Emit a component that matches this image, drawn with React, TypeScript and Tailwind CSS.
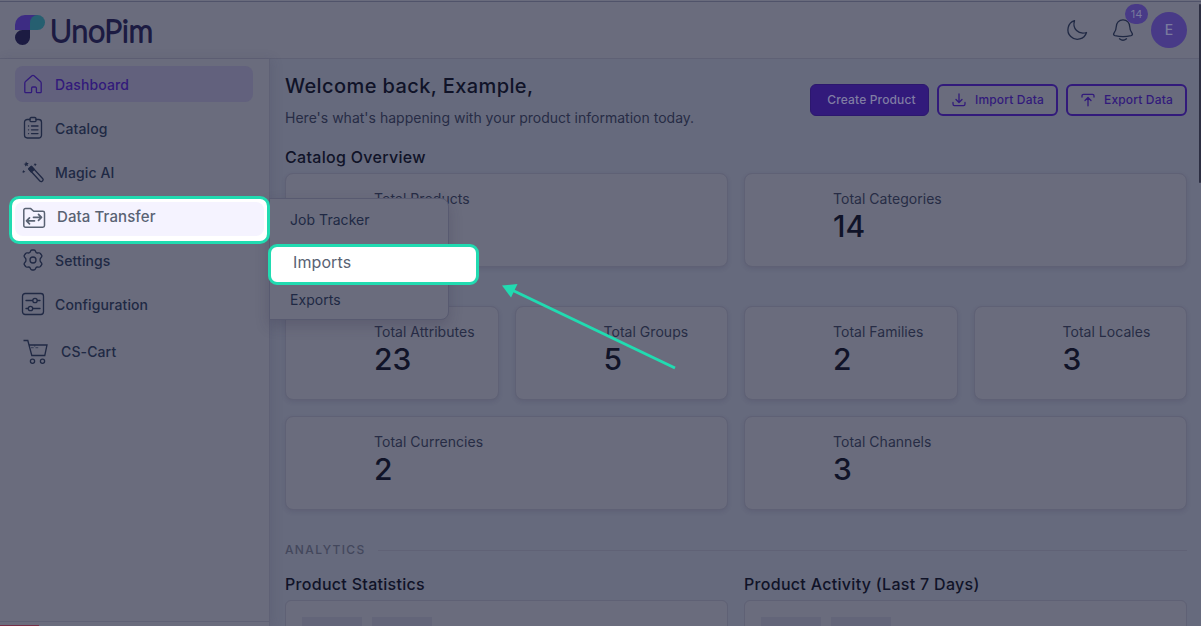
import type { ReactNode } from "react"

function Icon({ children, className = "" }: { children: ReactNode; className?: string }) {
  return (
    <svg
      viewBox="0 0 24 24"
      fill="none"
      stroke="currentColor"
      strokeWidth="1.3"
      strokeLinecap="round"
      strokeLinejoin="round"
      className={`size-6 shrink-0 ${className}`}
    >
      {children}
    </svg>
  )
}

const HomeIcon = () => (
  <Icon>
    <path d="M3.8 19.8v-8.6c0-.7.200-1.200.7-1.600L11 3.800c.6-.5 1.400-.5 2 0l6.500 5.800c.5.4.7.9.7 1.600v8.600c0 .5-.4.9-.9.900h-3c-.5 0-.900-.4-.900-.900v-3.500c0-.8-.5-1.300-1.200-1.300h-2.400c-.7 0-1.200.5-1.200 1.300v3.500c0 .5-.4.9-.9.900h-5c-.5 0-.900-.4-.900-.900z" />
  </Icon>
)

const CatalogIcon = () => (
  <Icon>
    <path d="M9 3.500H6.300A2.800 2.800 0 0 0 3.500 6.300v13A2.800 2.800 0 0 0 6.300 22h11.400a2.800 2.800 0 0 0 2.800-2.800v-13a2.800 2.800 0 0 0-2.800-2.700H15" />
    <rect x="9" y="1.500" width="6" height="4.200" rx="1.200" />
    <path d="M7.500 10h.1M7.500 13.800h.1M7.500 17.600h.1M10.500 10H17M10.500 13.800H17M10.500 17.600H17" />
  </Icon>
)

const MagicIcon = () => (
  <Icon>
    <path d="M8.100 9.200 10.700 6.600 21.800 18.700c.5.600.4 1.500-.1 2l-.6.600c-.6.500-1.500.500-2-.1z" />
    <path d="M7.600 8.800 10.300 6.200l2.900 3.200-2.900 2.700z" fill="currentColor" />
    <g fill="currentColor" stroke="none">
      <path d="m5 1.500.9 1.600 1.800-.1-1.200 1.400.7 1.700-1.700-.7-1.400 1.200.1-1.800-1.600-.9 1.800-.5z" />
      <path d="m14 3 .6 1 1.300.2-1.100.8-.3 1.300-.8-1-1.300-.1 1-.9z" />
      <path d="m2.500 10 .6 1 1.300.2-1.100.8-.3 1.300-.8-1-1.300-.1 1-.9z" />
    </g>
  </Icon>
)

const TransferIcon = () => (
  <Icon>
    <path
      d="M1.800 4.300c0-1 .7-1.700 1.700-1.700h5.200l3 2.700h9.200c1 0 1.600.7 1.600 1.600v12.600c0 1-.7 1.700-1.700 1.700H3.500c-1 0-1.700-.7-1.700-1.700z"
      strokeWidth="1.500"
    />
    <path d="M11.500 11.300h8m-3-3 3 3-3 3M12.500 14.800h-8m3-3-3 3 3 3" strokeWidth="1.700" />
  </Icon>
)

const SettingsIcon = () => (
  <Icon>
    <path d="M9.300 3.700c.3-1 .8-1.700 1.700-1.700h2c.9 0 1.400.7 1.700 1.700.3 1 1.300 1.500 2.300 1.200 1-.2 1.900-.2 2.400.6l1.300 1.800c.4.800.1 1.500-.6 2.200-.8.700-1.100 1.300-1.100 2.500s.3 1.800 1.100 2.500c.7.700 1 1.400.6 2.200l-1.300 1.800c-.5.8-1.400.8-2.400.6-1-.3-2 .2-2.300 1.200-.3 1-.8 1.700-1.700 1.700h-2c-.9 0-1.400-.7-1.700-1.700-.3-1-1.300-1.500-2.300-1.200-1 .2-1.900.2-2.400-.6l-1.300-1.800c-.4-.8-.1-1.500.6-2.200.8-.7 1.100-1.300 1.100-2.500s-.3-1.800-1.100-2.500c-.7-.7-1-1.400-.6-2.200l1.300-1.800c.5-.8 1.400-.8 2.400-.6 1 .3 2-.2 2.300-1.200z" />
    <circle cx="12" cy="12" r="3" />
  </Icon>
)

const ConfigIcon = () => (
  <Icon>
    <rect x="1.500" y="1.500" width="21" height="21" rx="2.700" />
    <path d="M5 8.500h6.300M16.500 8.500H19M5 16.500h2M12 16.500h7" />
    <circle cx="14" cy="8.500" r="2.200" />
    <circle cx="9.500" cy="16.500" r="2.200" />
  </Icon>
)

const CartIcon = () => (
  <svg viewBox="0 0 26 26" fill="none" stroke="currentColor" strokeWidth="1.3" className="size-[26px] shrink-0">
    <path d="M.5 1.500h4.300l4 15h13L24 6H6.100" />
    <path d="M8 8.700h2.700M12.500 8.700h2.700M11 7h1.300" strokeWidth=".7" />
    <circle cx="9.500" cy="22.300" r="2.100" />
    <circle cx="19.500" cy="22.300" r="2.100" />
  </svg>
)

function Logo() {
  return (
    <svg width="140" height="44" viewBox="0 -6 140 44" className="shrink-0">
      <path d="M0 16V11A10 10 0 0 1 10 1h12.500L15 16z" fill="#3d2c83" />
      <path d="M15 16V8.500a7.500 7.500 0 1 1 7.500 7.500z" fill="#265f70" />
      <path d="M15 16v7.500a7.500 7.500 0 1 1-15 0A7.500 7.500 0 0 1 7.500 16z" fill="#1c1b42" />
      <text
        x="35"
        y="27.500"
        textLength="103"
        lengthAdjust="spacingAndGlyphs"
        fill="#1c1b42"
        stroke="#1c1b42"
        strokeWidth="1.800"
        strokeLinejoin="round"
        className="font-['Lato',sans-serif] text-[31px] font-light"
      >
        UnoPim
      </text>
    </svg>
  )
}

function Header() {
  return (
    <header className="flex h-[57px] shrink-0 items-center justify-between border-b border-[#5f6175] bg-[#6a6c7d] pr-3.5 pl-[15px]">
      <Logo />
      <div className="flex items-center text-[#202944]">
        <Icon className="mr-[22px]">
          <path d="M9.500 2.700A9.500 9.500 0 1 0 21.500 14.500C13.500 17 7 10.500 9.500 2.700z" />
        </Icon>
        <div className="relative mr-4">
          <Icon>
            <path d="M5.200 9C5.200 4.800 8 1.800 12 1.800s6.800 3 6.800 7.200c0 3 .7 4.200 2.200 6.200.8 1.200.4 2-1 2.400-5 1.200-11 1.200-16 0-1.400-.4-1.800-1.200-1-2.400C4.500 13.200 5.200 12 5.200 9zM8.500 20.800c2 1.700 5 1.700 7 0" />
          </Icon>
          <span className="absolute -top-3.5 left-[14px] flex h-5 w-[23px] items-center justify-center rounded-full bg-[#483a87] text-[11px] text-[#77789c]">
            14
          </span>
        </div>
        <div className="flex size-9 items-center justify-center rounded-full bg-[#483a87] text-sm font-medium text-[#7a7a9d]">
          E
        </div>
      </div>
    </header>
  )
}

function NavItem({ icon, label, active = false }: { icon: ReactNode; label: string; active?: boolean }) {
  return (
    <a
      className={`flex h-9 items-center gap-2.5 rounded-lg pl-1.5 text-sm font-medium tracking-[0.12px] ${
        active ? "bg-[#62617d] text-[#321a7b]" : "text-[#202944]"
      }`}
    >
      {icon}
      <span className="pt-0.5">{label}</span>
    </a>
  )
}

function Sidebar() {
  return (
    <aside className="z-10 flex w-[270px] shrink-0 flex-col justify-between border-r border-[#5f6175] bg-[#6a6c7d] shadow-[3px_0_10px_rgba(60,55,85,0.14)]">
      <nav className="flex flex-col gap-2 pt-[7px] pr-4 pl-[15px]">
        <NavItem icon={<HomeIcon />} label="Dashboard" active />
        <NavItem icon={<CatalogIcon />} label="Catalog" />
        <NavItem icon={<MagicIcon />} label="Magic AI" />
        {/* Slot of the highlighted entry */}
        <div className="h-9" />
        <NavItem icon={<SettingsIcon />} label="Settings" />
        <NavItem icon={<ConfigIcon />} label="Configuration" />
        <div className="mt-1 ml-0.5 flex h-9 items-center gap-3 pl-1.5 text-sm font-medium tracking-[0.12px] text-[#202944]">
          <CartIcon />
          CS-Cart
        </div>
      </nav>
      <div className="h-[5px] border-t border-[#5f6175]">
        <div className="mt-[3px] h-px w-[39px] bg-[#762e46]" />
      </div>
    </aside>
  )
}

function ActionButton({ label, children }: { label: string; children: ReactNode }) {
  return (
    <button className="flex h-8 w-[121px] items-center justify-center gap-2 rounded-md border-2 border-[#321a7b] bg-[#6a6c7d] text-xs font-medium tracking-[0.16px] text-[#321a7b]">
      <svg
        viewBox="0 0 16 16"
        fill="none"
        stroke="currentColor"
        strokeWidth="1.3"
        strokeLinecap="round"
        strokeLinejoin="round"
        className="size-4"
      >
        {children}
      </svg>
      {label}
    </button>
  )
}

function StatCard({ label, value, wide = false }: { label: string; value: string; wide?: boolean }) {
  return (
    <div
      className={`h-[94px] rounded-lg border border-[#5f6175] bg-[#6a6c7d] pt-[15px] pl-[88px] shadow-[0_2px_4px_rgba(50,46,75,0.14)] ${
        wide ? "col-span-2" : ""
      }`}
    >
      <p className="text-sm leading-5 tracking-[0.03px] text-[#272c45]">{label}</p>
      <p className="text-[30px] leading-[34px] font-medium text-[#101328]">{value}</p>
    </div>
  )
}

function ChartCard({ title }: { title: string }) {
  return (
    <div>
      <h2 className="text-base leading-6 font-medium tracking-[0.3px] text-[#101328]">{title}</h2>
      <div className="mt-1 flex h-40 gap-2.5 rounded-md border border-[#5f6175] bg-[#6a6c7d] p-4">
        <div className="h-8 w-[60px] bg-[#636579]" />
        <div className="h-8 w-[60px] bg-[#636579]" />
      </div>
    </div>
  )
}

function Dashboard() {
  return (
    <main className="min-w-0 flex-1 overflow-hidden pr-3.5 pl-[15px]">
      <div className="flex h-[86px] justify-between">
        <div className="pt-[13px]">
          <h1 className="text-xl leading-7 font-medium tracking-[0.4px] text-[#101328]">Welcome back, Example,</h1>
          <p className="mt-2 text-sm leading-5 tracking-[0.01px] text-[#272c45]">
            Here's what's happening with your product information today.
          </p>
        </div>
        <div className="flex gap-2 pt-[25px]">
          <button className="h-8 w-[119px] rounded-md border border-[#2c176e] bg-[#321a7b] pl-1 text-xs font-medium tracking-[0.16px] text-[#807da3]">
            Create Product
          </button>
          <ActionButton label="Import Data">
            <path d="M8 2v8M5 7.500 8 10.500l3-3M2 10.500V12c0 1 .6 1.600 1.500 1.600h9c.9 0 1.500-.6 1.500-1.600v-1.500" />
          </ActionButton>
          <ActionButton label="Export Data">
            <path d="M8 13.800V5.500M5 8.500l3-3 3 3M2 5V3.800c0-1 .6-1.500 1.500-1.500h9c.9 0 1.500.5 1.500 1.500V5" />
          </ActionButton>
        </div>
      </div>

      <h2 className="text-base leading-6 font-medium tracking-[0.3px] text-[#101328]">Catalog Overview</h2>
      <div className="mt-1 grid grid-cols-4 gap-4">
        <StatCard label="Total Products" value="23" wide />
        <StatCard label="Total Categories" value="14" wide />
      </div>
      <div className="mt-[39px] grid grid-cols-4 gap-4">
        <StatCard label="Total Attributes" value="23" />
        <StatCard label="Total Groups" value="5" />
        <StatCard label="Total Families" value="2" />
        <StatCard label="Total Locales" value="3" />
        <StatCard label="Total Currencies" value="2" wide />
        <StatCard label="Total Channels" value="3" wide />
      </div>

      <div className="mt-[30px] flex items-center gap-3">
        <span className="text-xs leading-5 font-medium tracking-[1.35px] text-[#43475c]">ANALYTICS</span>
        <div className="h-px flex-1 bg-[#606276]" />
      </div>
      <div className="mt-3 grid grid-cols-2 gap-4">
        <ChartCard title="Product Statistics" />
        <ChartCard title="Product Activity (Last 7 Days)" />
      </div>
    </main>
  )
}

export default function App() {
  return (
    <div className="relative flex h-[626px] w-[1201px] flex-col overflow-hidden bg-[#666a7d] font-['Inter',sans-serif]">
      <div className="h-0.5 shrink-0 border-b border-[#50536a] bg-[#6a6c7d]" />
      <Header />
      <div className="flex min-h-0 flex-1">
        <Sidebar />
        <Dashboard />
      </div>
      <div className="absolute top-1 right-0 h-[179px] w-0.5 rounded bg-[#2c2e42]" />

      {/* Data transfer submenu */}
      <div className="absolute top-[198px] left-[269px] z-20 h-[122px] w-[180px] rounded-r-lg border border-[#585a70] bg-[#6a6c7d] px-5 text-sm tracking-[0.05px] text-[#202944] shadow-[0_6px_14px_rgba(45,42,70,0.22)]">
        <div className="flex h-[41px] items-center">Job Tracker</div>
        <div className="h-10" />
        <div className="flex h-[39px] items-center">Exports</div>
      </div>

      {/* Spotlights */}
      <div className="absolute top-[196px] left-[9px] z-30 h-[48px] w-[261px] rounded-[10px] border-3 border-[#21dbb1] bg-white p-[3px] pb-[5px]">
        <div className="flex h-full items-center gap-2.5 rounded-lg bg-[#f5f3ff] pb-[3px] pl-[7px] text-[15px] font-medium tracking-[0.1px] text-[#596273]">
          <TransferIcon />
          <span className="pl-px">Data Transfer</span>
        </div>
      </div>
      <div className="absolute top-[244px] left-[268px] z-30 flex h-[41px] w-[211px] items-center rounded-[9px] border-3 border-[#21dbb1] bg-white pb-1.5 pl-[22px] text-base tracking-[0.1px] text-[#596273]">
        Imports
      </div>
      <svg className="absolute top-0 left-0 z-30 h-full w-full" viewBox="0 0 1201 626">
        <path d="M513 290.500 675 368" stroke="#21dbb1" strokeWidth="3" />
        <path d="M502 285.500 517.500 284 511 297.500z" fill="#21dbb1" />
      </svg>
    </div>
  )
}
